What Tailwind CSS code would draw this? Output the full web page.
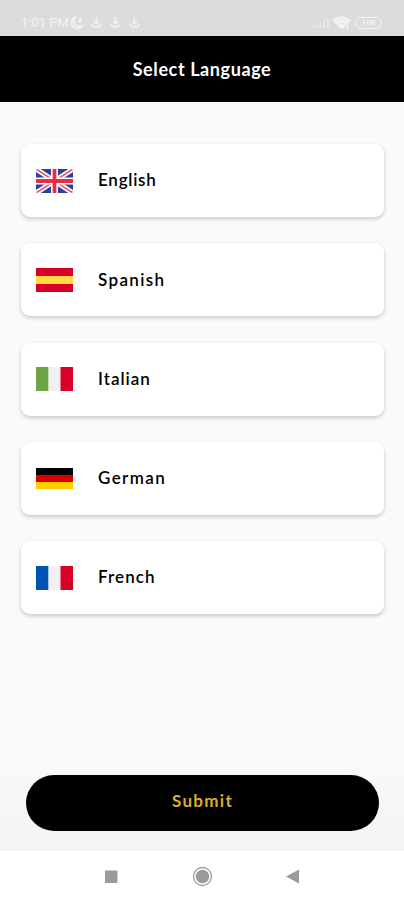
<!DOCTYPE html>
<html lang="en">
<head>
<meta charset="utf-8">
<title>Select Language</title>
<script src="https://cdn.jsdelivr.net/npm/@tailwindcss/browser@4"></script>
</head>
<body class="w-[404px] h-[900px] overflow-hidden flex flex-col bg-[#fafafa] font-['Lato',sans-serif] text-black">
  <div class="h-9 shrink-0 bg-[#dcdcdc] flex items-start pt-[15px] pl-[21px] pr-[21px] text-[#f2f2f2]">
    <span class="font-['Roboto',sans-serif] text-[13px] leading-4 w-[49px] whitespace-nowrap">1:01 PM</span>
    <svg class="w-[15px] h-[16px]" viewBox="0 0 15 16" fill="none" stroke="currentColor" stroke-width="1.500" stroke-linejoin="round"><path d="M5.500 2A6 6 0 1 0 13 10A5 5 0 0 1 5.500 2ZM9 4h2.500L9 7h2.500"/></svg>
    <div class="flex gap-2 ml-[6px] pt-[2px]">
      <svg class="w-[11px] h-[12px]" viewBox="0 0 11 12" fill="none" stroke="currentColor" stroke-width="1.400"><path d="M5.500 0v7M3 4.500l2.500 2.500L8 4.500M.8 7c1 4 8.400 4 9.400 0"/></svg>
      <svg class="w-[11px] h-[12px]" viewBox="0 0 11 12" fill="none" stroke="currentColor" stroke-width="1.400"><path d="M5.500 0v7M3 4.500l2.500 2.500L8 4.500M.8 7c1 4 8.400 4 9.400 0"/></svg>
      <svg class="w-[11px] h-[12px]" viewBox="0 0 11 12" fill="none" stroke="currentColor" stroke-width="1.400"><path d="M5.500 0v7M3 4.500l2.500 2.500L8 4.500M.8 7c1 4 8.400 4 9.400 0"/></svg>
    </div>
    <div class="ml-auto flex">
      <svg class="w-[19px] h-4" viewBox="0 0 19 16" stroke="#e8e8e8" stroke-width="1.800"><path d="M1.500 13v-2M5.500 13V9.500M9.500 13V7.500M13 13V5.500M17 13V3.500"/></svg>
      <svg class="w-[19px] h-4 ml-[2px]" viewBox="0 0 19 16" fill="currentColor"><path d="M0 5.500C5-.3 14-.3 19 5.500L16.500 8 12.500 12 9.500 14.500Z"/><path d="M2 7.500c4-4 11-4 15 0M5 10.500c3-3 6-3 9 0" fill="none" stroke="#dfdfdf" stroke-width=".7"/><path d="M15.500 9.500v5M14 12h3" stroke="currentColor"/></svg>
      <div class="ml-[4px] mr-[1px] mt-[2px] w-[27px] h-[12px] rounded-full border border-[#f2f2f2] flex items-center justify-center font-['Roboto',sans-serif] font-bold text-[8px]">100</div>
    </div>
  </div>

  <header class="h-[66px] shrink-0 bg-black flex items-center justify-center text-white font-bold text-[18px] tracking-[0.6px]">Select Language</header>

  <main class="h-[749px] shrink-0 flex flex-col pt-[42px] bg-linear-to-b from-[#fafafa] from-85% to-[#f4f4f4]">
    <ul class="flex flex-col gap-[26.300px] ml-[21px] mr-5 font-semibold text-[17px]">
      <li class="h-[73px] flex items-center pl-[15px] bg-white rounded-[9px] shadow-[0_2px_4px_rgba(0,0,0,0.2)]">
        <svg class="w-[37px] h-6" viewBox="0 0 37 24">
          <clipPath id="uk"><rect width="37" height="24" rx="2.500"/></clipPath>
          <g clip-path="url(#uk)"><path fill="#29419a" d="M0 0h37v24H0z"/>
          <path stroke="#fff" stroke-width="5" d="M0 0l37 24M37 0L0 24"/>
          <path stroke="#ef5a6c" stroke-width="1.700" d="M0 0l37 24M37 0L0 24"/>
          <path stroke="#fff" stroke-width="7" d="M18.500 0v24M0 12h37"/>
          <path stroke="#e92d46" stroke-width="3.800" d="M18.500 0v24M0 12h37"/></g>
        </svg>
        <span class="ml-[25px] pb-0.5 tracking-[0.75px]">English</span>
      </li>
      <li class="h-[73px] flex items-center pl-[15px] bg-white rounded-[9px] shadow-[0_2px_4px_rgba(0,0,0,0.2)]">
        <svg class="w-[37px] h-6" viewBox="0 0 37 24"><path fill="#d80027" d="M0 0h37v24H0z"/><path fill="#ffda44" d="M0 8h37v8H0z"/></svg>
        <span class="ml-[25px] pb-px tracking-[1.350px]">Spanish</span>
      </li>
      <li class="h-[73px] flex items-center pl-[15px] bg-white rounded-[9px] shadow-[0_2px_4px_rgba(0,0,0,0.2)]">
        <svg class="w-[37px] h-6" viewBox="0 0 37 24"><path fill="#f0f0f0" d="M0 0h37v24H0z"/><path fill="#6da544" d="M0 0h12.300v24H0z"/><path fill="#d80027" d="M24.500 0H37v24H24.500z"/></svg>
        <span class="ml-[25px] pb-px tracking-[1px]">Italian</span>
      </li>
      <li class="h-[73px] flex items-center pl-[15px] bg-white rounded-[9px] shadow-[0_2px_4px_rgba(0,0,0,0.2)]">
        <svg class="w-[37px] h-[21px]" viewBox="0 0 37 21"><path d="M0 0h37v7H0z"/><path fill="#dd0000" d="M0 7h37v7H0z"/><path fill="#ffce00" d="M0 14h37v7H0z"/></svg>
        <span class="ml-[25px] pb-0.5 tracking-[1.400px]">German</span>
      </li>
      <li class="h-[73px] flex items-center pl-[15px] bg-white rounded-[9px] shadow-[0_2px_4px_rgba(0,0,0,0.2)]">
        <svg class="w-[37px] h-6" viewBox="0 0 37 24"><path fill="#f0f0f0" d="M0 0h37v24H0z"/><path fill="#0052b4" d="M0 0h12.300v24H0z"/><path fill="#d80027" d="M24.500 0H37v24H24.500z"/></svg>
        <span class="ml-[25px] pb-px tracking-[1.100px]">French</span>
      </li>
    </ul>
    <button class="mt-auto mb-5 ml-[26px] mr-[25px] h-14 shrink-0 rounded-full bg-black text-[#dcab36] font-bold text-[17px] tracking-[1.300px] pb-[5px]">Submit</button>
  </main>

  <nav class="flex-1 bg-white flex justify-center pt-[15px]">
    <svg class="w-[202px] h-[22px]" viewBox="101 0 202 22" fill="#9b9b9b"><rect x="105" y="4.500" width="12.500" height="12.500"/><circle cx="202.500" cy="10.500" r="6.800"/><circle cx="202.500" cy="10.500" r="9" fill="none" stroke="#9b9b9b" stroke-width="1.300"/><path d="M286 10.500L299 3.500v14z"/></svg>
  </nav>
</body>
</html>
